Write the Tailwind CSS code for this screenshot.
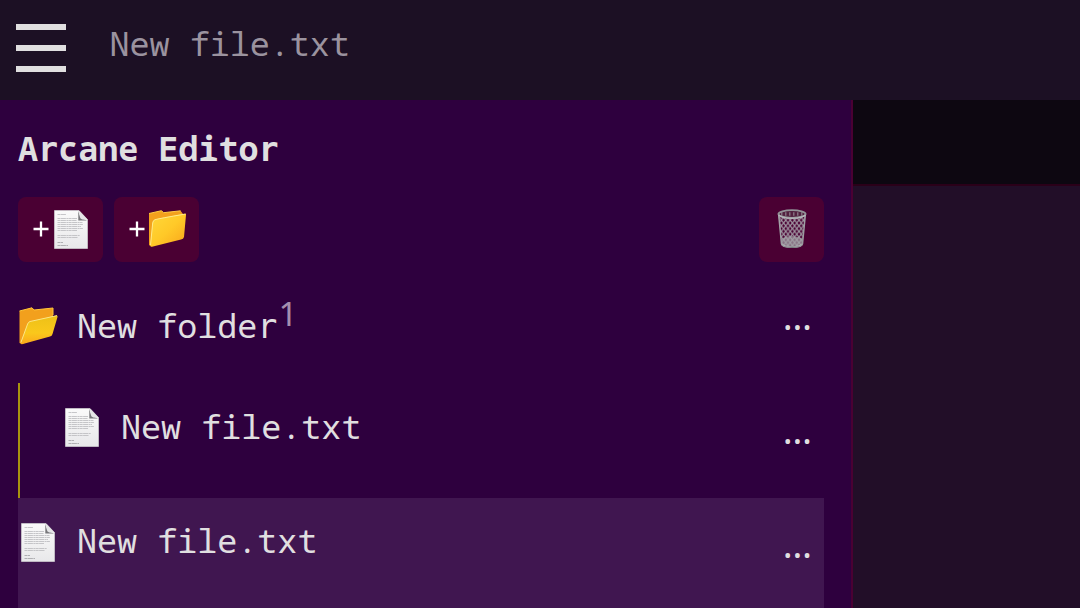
<!DOCTYPE html>
<html lang="en">
<head>
<meta charset="utf-8">
<title>Arcane Editor</title>
<script src="https://cdn.jsdelivr.net/npm/@tailwindcss/browser@4"></script>
</head>
<body class="h-[608px] w-[1080px] overflow-hidden bg-[#220e28] font-['Noto_Sans_Mono','Droid_Sans_Mono','DejaVu_Sans_Mono',monospace] text-[33.4px] leading-[40px] text-[#e0dfe0]">
<svg class="absolute h-0 w-0">
  <defs>
    <linearGradient id="paper" x1="0" y1="0" x2="0" y2="1"><stop offset="0" stop-color="#fafafa"/><stop offset="1" stop-color="#e8e8ea"/></linearGradient>
    <linearGradient id="gold" x1="0" y1="0" x2="1" y2="1"><stop offset="0" stop-color="#ffd83a"/><stop offset=".5" stop-color="#ffc928"/><stop offset="1" stop-color="#f9a51b"/></linearGradient>
    <linearGradient id="goldOpen" x1="0" y1="0" x2="0" y2="1"><stop offset="0" stop-color="#edc018"/><stop offset=".6" stop-color="#fac81b"/><stop offset="1" stop-color="#fba81c"/></linearGradient>
    <linearGradient id="steel" x1="0" y1="0" x2="1" y2="0"><stop offset="0" stop-color="#a5a5aa"/><stop offset=".5" stop-color="#77777c"/><stop offset="1" stop-color="#a0a0a5"/></linearGradient>
    <pattern id="mesh" width="4.4" height="5.6" patternUnits="userSpaceOnUse"><path d="M0 0L4.400 5.600M4.400 0L0 5.600" stroke="#9e949f" stroke-width="1.25"/></pattern>
    <symbol id="file" viewBox="0 0 34 39">
      <path d="M.5.5H25L33.500 9.500V38.500H.5Z" fill="url(#paper)" stroke="#d2d2d4" stroke-width=".7"/>
      <path d="M24.300.8V10.500H33L29 8.700Q25.500 7 24.300.8Z" fill="#77777a"/>
      <path d="M24.700.7L33.300 9.600Q28 10 26.500 8.500Q25.500 6.500 24.700.7Z" fill="#e5e5e7"/>
      <g stroke="#b9b9bc" stroke-width=".8" stroke-dasharray="3 .4 5 .5 2 .3">
        <path d="M3.500 4.500H12M3.500 8.500H23M3.500 10.500H22.500M3.500 12.500H28.500M3.500 14.500H29M3.500 16.500H27M3.500 18.500H29M3.500 20.500H23M3.500 25.500H26M3.500 27.500H24"/>
        <path d="M3.500 32.500H9M3.500 35.500H14" stroke="#a0a0a3"/>
      </g>
    </symbol>
    <symbol id="folder" viewBox="0 0 39 38">
      <path d="M1 3.500L13.500.7L15.500 2.700L32.500.8L35 4V25L3 36.500L1 35Z" fill="#f2a01d"/>
      <path d="M1 3.500L13.500.7L15.500 2.700L32.500.8" fill="none" stroke="#ffcc45"/>
      <path d="M7 9.500Q10 8.500 37.500 3.800Q38.400 4 38 5L36 27Q35.500 29 33 29.500L4 36.800Q2.200 37 2.400 35L4.500 13Q5 10 7 9.500Z" fill="url(#gold)"/>
      <path d="M2.500 35L4.700 13Q5 10.300 7 9.700Q10 8.700 37.500 4" fill="none" stroke="#ffeb8b" stroke-width="1"/>
    </symbol>
    <symbol id="folder-open" viewBox="0 0 39 38">
      <path d="M.5 4L13 .8L15 3L34 1V25L3 37L.5 36Z" fill="#f2a01d"/>
      <path d="M.5 4L13 .8L15 3L34 1V8" fill="none" stroke="#ffc63a"/>
      <path d="M11 14.500L37.500 8.500Q39 8.500 38.500 10L33.500 27Q33 29 31 29.600L3 37.200Q1.200 37.400 1.800 35.500L8.500 17Q9.300 15 11 14.500Z" fill="url(#goldOpen)"/>
      <path d="M1.900 35.500L8.600 17Q9.300 15 11 14.500L38 8.600" fill="none" stroke="#fbe687"/>
    </symbol>
    <symbol id="trash" viewBox="0 0 30 40">
      <path d="M1.500 6L4.500 35Q5 38.500 15 38.500T25.500 35L28.500 6Z" fill="url(#mesh)"/>
      <path d="M4 30Q9 26.500 15 27T26 30L25.500 35Q25 38.500 15 38.500T4.500 35Z" fill="#a3a3a6" opacity=".7"/>
      <path d="M5 35Q6 38 15 38T25 35" fill="none" stroke="#b7b9bb" stroke-width="1.600"/>
      <path d="M1.700 6L4.500 35Q5 38.300 15 38.300T25.500 35L28.300 6" fill="none" stroke="url(#steel)" stroke-width="1.500"/>
      <ellipse cx="15" cy="5" rx="13.600" ry="3.800" fill="#52203f" stroke="#929297" stroke-width="1.800"/>
      <path d="M4 5H26" stroke="#a4a1a8" stroke-width="3.500" stroke-dasharray="1.500 2.500" opacity=".6"/>
      <path d="M1.500 6Q5 9.300 15 9.300T28.500 6" fill="none" stroke="#b5b5ba" stroke-width="1.500"/>
    </symbol>
  </defs>
</svg>
<header class="flex h-[100px] items-start bg-[#1c1024] pl-4">
  <div class="mt-[23.5px] flex w-[50px] flex-col gap-[15px]">
    <span class="h-[6px] bg-[#e0dfe0]"></span><span class="h-[6px] bg-[#e0dfe0]"></span><span class="h-[6px] bg-[#e0dfe0]"></span>
  </div>
  <span class="mt-[23px] ml-[43.5px] whitespace-pre text-[#9b939f]">New file.txt</span>
</header>
<div class="flex h-[508px]">
  <aside class="w-[853px] shrink-0 border-r-2 border-[#4a0033] bg-[#2e003e] pt-[28px] pr-[27px] pl-[18px]">
    <h1 class="h-[69px] font-bold">A<span class="font-['DejaVu_Sans_Mono']">r</span>cane Edito<span class="font-['DejaVu_Sans_Mono']">r</span></h1>
    <div class="flex h-[65px] gap-[11px]">
      <button class="flex w-[85px] items-center justify-center rounded-lg bg-[#4a0033]"><svg class="-mt-[2px] h-[16px] w-[16px]" viewBox="0 0 16 16"><path d="M8 .5V15.500M.5 8H15.500" stroke="#fff" stroke-width="2.300"/></svg><svg class="-mt-px ml-[5px] h-[39px] w-[34px]"><use href="#file"/></svg></button>
      <button class="flex w-[85px] items-center justify-center rounded-lg bg-[#4a0033]"><svg class="-mt-[2px] h-[16px] w-[16px]" viewBox="0 0 16 16"><path d="M8 .5V15.500M.5 8H15.500" stroke="#fff" stroke-width="2.300"/></svg><svg class="-mt-px -mr-[2px] ml-[3px] h-[38px] w-[39px]"><use href="#folder"/></svg></button>
      <button class="ml-auto flex w-[65px] items-center justify-center rounded-lg bg-[#4a0033]"><svg class="-mt-px h-[40px] w-[30px]"><use href="#trash"/></svg></button>
    </div>
    <div class="flex h-[121px] items-start pt-[44px]">
      <svg class="mt-px ml-px h-[38px] w-[39px]"><use href="#folder-open"/></svg>
      <span class="-mt-px ml-[19px]">New folde<span class="font-['DejaVu_Sans_Mono']">r</span></span><span class="-mt-[13px] ml-[1px] font-['Noto_Sans'] text-[#a58fae]">1</span>
      <span class="mt-[-10px] mr-[12px] ml-auto font-['Noto_Sans'] text-[37px]">…</span>
    </div>
    <div class="flex h-[115px] items-start border-l-2 border-[#a8940f] pt-[25px] pl-[45px]">
      <svg class="h-[39px] w-[34px]"><use href="#file"/></svg>
      <span class="-mt-[2px] ml-[22px]">New file.txt</span>
      <span class="mt-[2px] mr-[12px] ml-auto font-['Noto_Sans'] text-[37px]">…</span>
    </div>
    <div class="flex h-[115px] items-start bg-[#401650] pt-[25px] pl-[3px]">
      <svg class="h-[39px] w-[34px]"><use href="#file"/></svg>
      <span class="-mt-[3px] ml-[22px]">New file.txt</span>
      <span class="mt-[1px] mr-[12px] ml-auto font-['Noto_Sans'] text-[37px]">…</span>
    </div>
  </aside>
  <main class="flex-1"><div class="h-[86px] border-b-2 border-[#2a0019] bg-[#0d0711]"></div></main>
</div>
</body>
</html>
